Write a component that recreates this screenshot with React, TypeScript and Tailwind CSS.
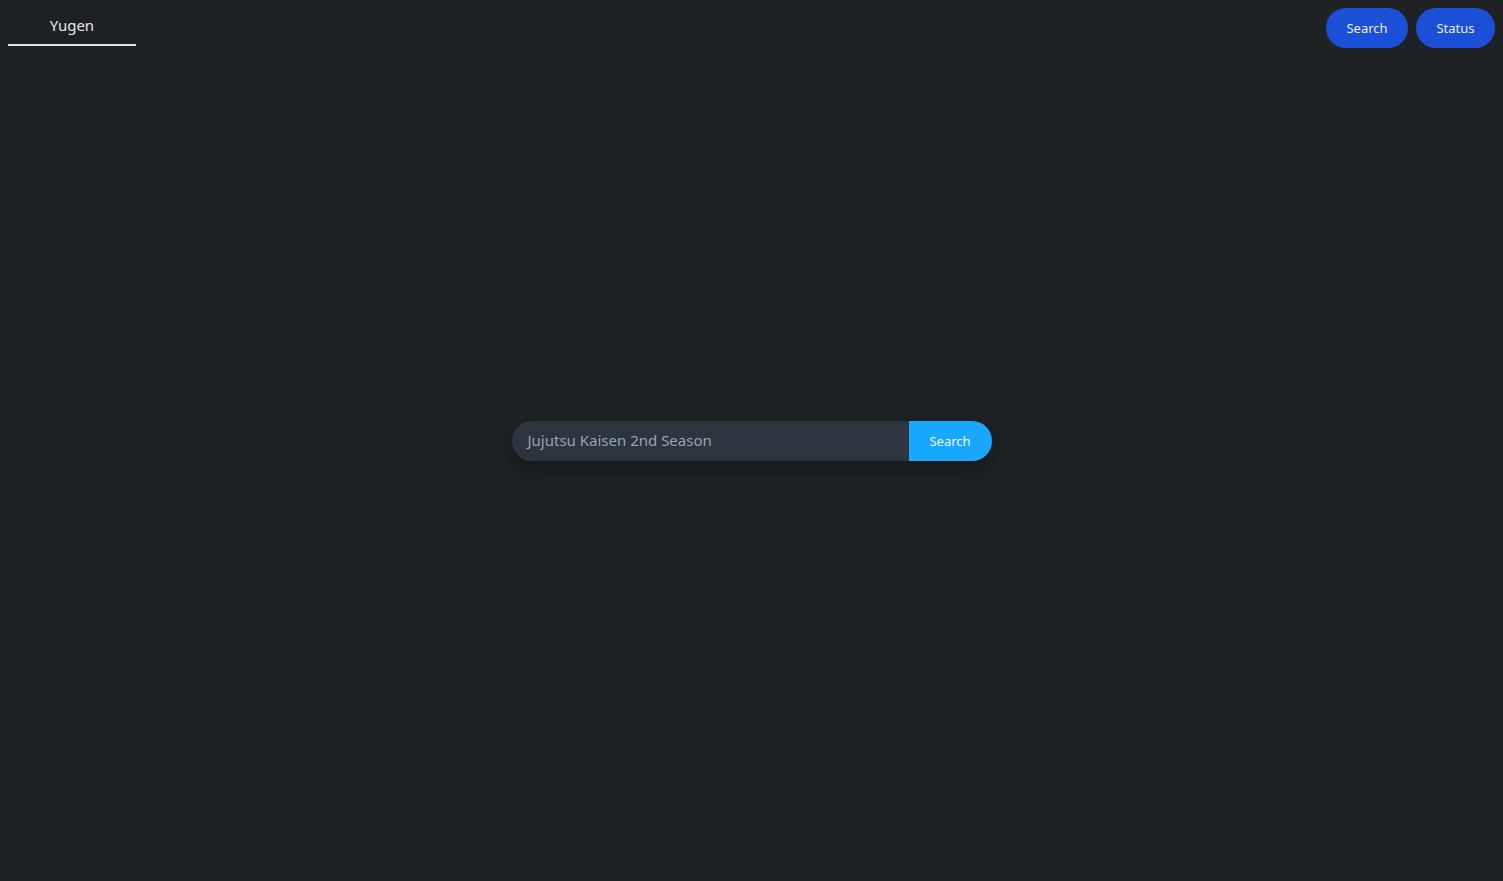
import React from "react";

const font = { fontFamily: '"Noto Sans", "Open Sans", sans-serif' };

const App = () => {
  return (
    <div className="relative h-[881px] w-full overflow-hidden bg-[#1f2224] text-white" style={font}>
      {/* Header */}
      <div className="flex items-start justify-between px-2 pt-2">
        <div className="flex w-32 flex-col items-center">
          <span className="mt-[7px] text-[15px] leading-5 text-[#e8e8e8]">Yugen</span>
          <div className="mt-[9px] h-[2px] w-full bg-[#e5e5e5]" />
        </div>
        <div className="flex gap-2">
          <button className="h-10 w-[82px] rounded-full bg-[#1c4fd8] pt-[2px] text-[13px] text-[#e8ecf8]">Search</button>
          <button className="h-10 w-[79px] rounded-full bg-[#1c4fd8] pt-[2px] text-[13px] text-[#e8ecf8]">Status</button>
        </div>
      </div>

      {/* Search bar */}
      <div className="pointer-events-none absolute inset-0 flex items-center justify-center">
        <div className="pointer-events-auto flex h-10 w-[480px] rounded-full shadow-[0_6px_20px_rgba(0,0,0,0.35)]">
          <div className="flex flex-1 items-center rounded-l-full bg-[#2c353e] pl-4">
            <span className="text-[15px] text-[#9aa3ab]">Jujutsu Kaisen 2nd Season</span>
          </div>
          <button className="h-10 w-[83px] rounded-r-full bg-[#1aa8ff] pt-[2px] text-[13px] text-[#eef7ff]">Search</button>
        </div>
      </div>
    </div>
  );
};

export default App;
